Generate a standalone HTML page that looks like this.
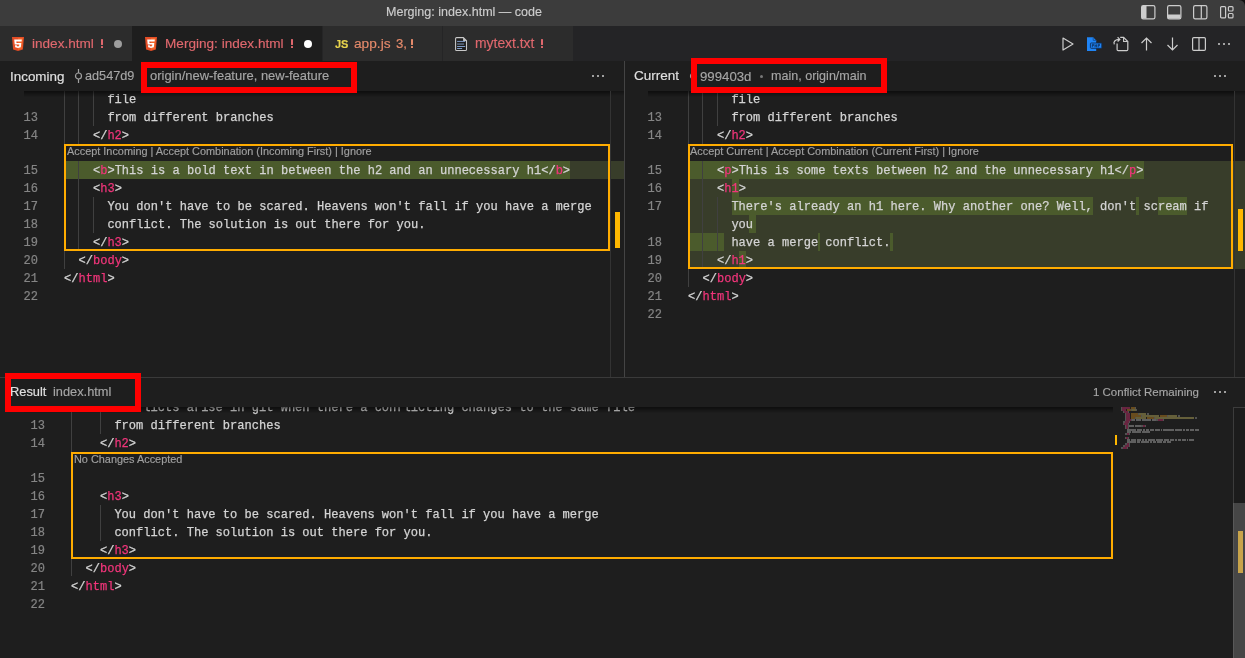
<!DOCTYPE html><html><head><meta charset="utf-8"><style>
*{margin:0;padding:0;box-sizing:border-box}
html,body{width:1245px;height:658px;overflow:hidden;background:#1e1e1e}
body{position:relative;font-family:"Liberation Sans",sans-serif}
.a{position:absolute}
.ui{font-family:"Liberation Sans",sans-serif;white-space:nowrap;will-change:transform;-webkit-text-stroke:0.15px}
.code{font-family:"Liberation Mono",monospace;font-size:12.05px;line-height:18px;white-space:pre;color:#d4d4d4;will-change:transform;-webkit-text-stroke:0.25px}
.br{color:#d4d4d4}
.tg{color:#f0357a}
.ln{font-family:"Liberation Mono",monospace;font-size:12px;line-height:18px;color:#858585;text-align:right;width:30px;will-change:transform;-webkit-text-stroke:0.2px}
.clip{overflow:hidden}
.guide{position:absolute;width:1px;background:#404040}
.box{position:absolute;border:2px solid #ffac00}
.lens{font-family:"Liberation Sans",sans-serif;font-size:10.9px;line-height:10.9px;color:#a0a0a0;white-space:nowrap;will-change:transform;-webkit-text-stroke:0.15px}
.red{position:absolute;border:6.4px solid #ff0000}
</style></head><body>

<div class="a" style="left:1235px;top:0;width:10px;height:10px;background:#111"></div>
<div class="a" style="left:0;top:0;width:1245px;height:26px;background:#3c3c3c;border-top-right-radius:6px"></div>
<div class="a ui" style="left:386.10px;top:5.69px;font-size:12.54px;line-height:12.54px;color:#cccccc;">Merging: index.html — code</div>
<svg class="a" style="left:1141px;top:5px" width="15" height="15" viewBox="0 0 15 15"><rect x="0.6" y="0.6" width="13.3" height="13.3" rx="1.6" fill="none" stroke="#cccccc" stroke-width="1.2"/><rect x="1" y="1" width="4.5" height="12.5" fill="#cccccc"/></svg>
<svg class="a" style="left:1167px;top:5px" width="15" height="15" viewBox="0 0 15 15"><rect x="0.6" y="0.6" width="13.3" height="13.3" rx="1.6" fill="none" stroke="#cccccc" stroke-width="1.2"/><rect x="1" y="9.5" width="12.5" height="4" fill="#cccccc"/></svg>
<svg class="a" style="left:1193px;top:5px" width="15" height="15" viewBox="0 0 15 15"><rect x="0.6" y="0.6" width="13.3" height="13.3" rx="1.6" fill="none" stroke="#cccccc" stroke-width="1.2"/><rect x="7.7" y="1" width="1.2" height="12.5" fill="#cccccc"/></svg>
<svg class="a" style="left:1220px;top:5px" width="15" height="15" viewBox="0 0 15 15"><rect x="0.6" y="1.6" width="5" height="11.3" rx="1" fill="none" stroke="#cccccc" stroke-width="1.2"/><rect x="8.4" y="1.6" width="4.6" height="4.4" rx="1" fill="none" stroke="#cccccc" stroke-width="1.2"/><rect x="8.4" y="8.5" width="4.6" height="4.4" rx="1" fill="none" stroke="#cccccc" stroke-width="1.2"/></svg>
<div class="a" style="left:0;top:26px;width:1245px;height:35px;background:#242426"></div>
<div class="a" style="left:0;top:26px;width:132px;height:35px;background:#2c2c2c"></div>
<svg class="a" style="left:12px;top:37px" width="12" height="14" viewBox="0 0 12 14"><path d="M0 0H12L10.9 12.4L6 14L1.1 12.4Z" fill="#e44d26"/><path d="M6 1.1V12.9L9.9 11.7L10.8 1.1Z" fill="#f16529"/><path d="M2.2 2.6H9.8L9.6 4.4H4.3L4.5 5.9H9.3L8.8 10.2L6 11L3.2 10.2L3 8.2H4.8L4.9 9.1L6 9.4L7.1 9.1L7.3 7.6H2.7Z" fill="#ffffff"/></svg>
<div class="a ui" style="left:31.80px;top:37.11px;font-size:13.58px;line-height:13.58px;color:#e0686e;">index.html</div>
<div class="a" style="left:101.2px;top:39.2px;width:1.5px;height:6.2px;background:#e0686e;border-radius:0.6px"></div><div class="a" style="left:101.2px;top:46.2px;width:1.5px;height:1.8px;background:#e0686e;border-radius:0.5px"></div>
<div class="a" style="left:113.8px;top:40px;width:8px;height:8px;border-radius:50%;background:#9d9d9d"></div>
<div class="a" style="left:132px;top:26px;width:190px;height:35px;background:#1e1e1e"></div>
<svg class="a" style="left:145px;top:37px" width="12" height="14" viewBox="0 0 12 14"><path d="M0 0H12L10.9 12.4L6 14L1.1 12.4Z" fill="#e44d26"/><path d="M6 1.1V12.9L9.9 11.7L10.8 1.1Z" fill="#f16529"/><path d="M2.2 2.6H9.8L9.6 4.4H4.3L4.5 5.9H9.3L8.8 10.2L6 11L3.2 10.2L3 8.2H4.8L4.9 9.1L6 9.4L7.1 9.1L7.3 7.6H2.7Z" fill="#ffffff"/></svg>
<div class="a ui" style="left:164.90px;top:37.09px;font-size:13.6px;line-height:13.6px;color:#e0686e;">Merging: index.html</div>
<div class="a" style="left:291.2px;top:39.2px;width:1.5px;height:6.2px;background:#e0686e;border-radius:0.6px"></div><div class="a" style="left:291.2px;top:46.2px;width:1.5px;height:1.8px;background:#e0686e;border-radius:0.5px"></div>
<div class="a" style="left:303.5px;top:39.8px;width:8.4px;height:8.4px;border-radius:50%;background:#ffffff"></div>
<div class="a" style="left:322px;top:26px;width:120px;height:35px;background:#2c2c2c;border-left:1px solid #252526"></div>
<div class="a ui" style="left:335px;top:37px;font-size:11px;line-height:14px;font-weight:bold;color:#e8d44d">JS</div>
<div class="a ui" style="left:353.60px;top:37.01px;font-size:13.7px;line-height:13.7px;color:#e58a6b;">app.js</div>
<div class="a ui" style="left:395.80px;top:37.43px;font-size:13.2px;line-height:13.2px;color:#e58a6b;">3,</div>
<div class="a" style="left:411.3px;top:39.2px;width:1.5px;height:6.2px;background:#e58a6b;border-radius:0.6px"></div><div class="a" style="left:411.3px;top:46.2px;width:1.5px;height:1.8px;background:#e58a6b;border-radius:0.5px"></div>
<div class="a" style="left:442px;top:26px;width:131px;height:35px;background:#2c2c2c;border-left:1px solid #252526"></div>
<svg class="a" style="left:455px;top:37px" width="13" height="15" viewBox="0 0 13 15"><path d="M1.6 0.6H8.3L11.5 3.8V12.4Q11.5 13.5 10.4 13.5H1.6Q0.6 13.5 0.6 12.4V1.6Q0.6 0.6 1.6 0.6Z" fill="#1e1e1e" stroke="#c8c8c8" stroke-width="1.1"/><path d="M8.1 0.6V4H11.5Z" fill="#c8c8c8"/><rect x="2.1" y="3.9" width="8.1" height="1" fill="#7f9cc8"/><rect x="2.1" y="6.3" width="7" height="1.6" fill="#58687e"/><rect x="2.1" y="9" width="8.1" height="1" fill="#7f9cc8"/><rect x="2.1" y="11" width="5" height="1" fill="#7f9cc8"/></svg>
<div class="a ui" style="left:474.70px;top:36.84px;font-size:13.9px;line-height:13.9px;color:#e0686e;">mytext.txt</div>
<div class="a" style="left:541.4px;top:39.2px;width:1.5px;height:6.2px;background:#e0686e;border-radius:0.6px"></div><div class="a" style="left:541.4px;top:46.2px;width:1.5px;height:1.8px;background:#e0686e;border-radius:0.5px"></div>
<svg class="a" style="left:1060px;top:36px" width="180" height="16" viewBox="0 0 180 16"><path d="M3 2L13 8L3 14Z" fill="none" stroke="#cccccc" stroke-width="1.2" stroke-linejoin="round"/><path d="M27 1.2H33.2L36.2 4.4V14.9H27Z" fill="#1f84f5"/><path d="M33.2 1.4V4.4H36" fill="none" stroke="#0f4c94" stroke-width="0.8"/><rect x="30.4" y="7" width="11.4" height="5.3" rx="0.8" fill="#1f84f5" stroke="#0c2f5c" stroke-width="0.9"/><path d="M32.3 11.3V8.3H33.6V9.6H32.3M35 11.3V8.3M35 9.8H36.6M36.6 8.3V11.3M38.2 11.3V8.3H39.5V9.6H38.2" fill="none" stroke="#0c2f5c" stroke-width="0.8"/><path d="M60.2 1.3H63.6L67.8 5.5V13.6Q67.8 14.7 66.7 14.7H58.2Q57.1 14.7 57.1 13.6V7.4" fill="none" stroke="#cccccc" stroke-width="1.2"/><path d="M63.6 1.5V5.5H67.6" fill="none" stroke="#cccccc" stroke-width="1.1"/><path d="M54.4 8.4C53 6 55 3.4 59.5 3.4M57.6 1.3L59.8 3.4L57.6 5.5" fill="none" stroke="#cccccc" stroke-width="1.2"/><path d="M86.5 14.5V2M81.5 7L86.5 2L91.5 7" fill="none" stroke="#cccccc" stroke-width="1.2"/><path d="M112.5 1.5V14M107.5 9L112.5 14L117.5 9" fill="none" stroke="#cccccc" stroke-width="1.2"/><rect x="132.6" y="1.6" width="12.8" height="12.8" rx="1.2" fill="none" stroke="#cccccc" stroke-width="1.2"/><rect x="138.4" y="2" width="1.2" height="12" fill="#cccccc"/><circle cx="159" cy="8" r="1" fill="#cccccc"/><circle cx="164" cy="8" r="1" fill="#cccccc"/><circle cx="169" cy="8" r="1" fill="#cccccc"/></svg>
<div class="a" style="left:0;top:61px;width:1245px;height:30px;background:#1e1e1e"></div>
<div class="a" style="left:624px;top:61px;width:1px;height:316px;background:#444444"></div>
<div class="a ui" style="left:9.80px;top:69.56px;font-size:13.41px;line-height:13.41px;color:#e0e0e0;">Incoming</div>
<svg class="a" style="left:74px;top:69px" width="9" height="14" viewBox="0 0 9 14"><circle cx="4.5" cy="7" r="3" fill="none" stroke="#a0a0a0" stroke-width="1.2"/><path d="M4.5 0V4M4.5 10V14" stroke="#a0a0a0" stroke-width="1.2"/></svg>
<div class="a ui" style="left:85.00px;top:70.06px;font-size:12.69px;line-height:12.69px;color:#a6a6a6;">ad547d9</div>
<div class="a ui" style="left:149.90px;top:69.84px;font-size:12.96px;line-height:12.96px;color:#a6a6a6;">origin/new-feature, new-feature</div>
<svg class="a" style="left:591px;top:74px" width="14" height="4" viewBox="0 0 14 4"><circle cx="2" cy="2" r="1" fill="#cccccc"/><circle cx="7" cy="2" r="1" fill="#cccccc"/><circle cx="12" cy="2" r="1" fill="#cccccc"/></svg>
<div class="a ui" style="left:633.80px;top:69.36px;font-size:13.52px;line-height:13.52px;color:#e0e0e0;">Current</div>
<svg class="a" style="left:688.5px;top:69px" width="9" height="14" viewBox="0 0 9 14"><circle cx="4.5" cy="7" r="3" fill="none" stroke="#a0a0a0" stroke-width="1.2"/><path d="M4.5 0V4M4.5 10V14" stroke="#a0a0a0" stroke-width="1.2"/></svg>
<div class="a ui" style="left:699.90px;top:69.61px;font-size:13.23px;line-height:13.23px;color:#a6a6a6;">999403d</div>
<div class="a" style="left:760px;top:75px;width:3px;height:3px;border-radius:50%;background:#777"></div>
<div class="a ui" style="left:770.70px;top:70.18px;font-size:12.55px;line-height:12.55px;color:#a6a6a6;">main, origin/main</div>
<svg class="a" style="left:1213px;top:74px" width="14" height="4" viewBox="0 0 14 4"><circle cx="2" cy="2" r="1" fill="#cccccc"/><circle cx="7" cy="2" r="1" fill="#cccccc"/><circle cx="12" cy="2" r="1" fill="#cccccc"/></svg>
<div class="a clip" style="left:0px;top:91px;width:624px;height:286px">
<div class="a" style="left:64px;top:70px;width:560px;height:18px;background:#383d2a"></div><div class="a" style="left:64px;top:70px;width:506px;height:18px;background:#4b5b2c"></div><div class="guide" style="left:64px;top:0;height:178px"></div><div class="guide" style="left:78px;top:0;height:53px"></div><div class="guide" style="left:78px;top:70px;height:90px"></div><div class="guide" style="left:93px;top:0;height:35px"></div><div class="guide" style="left:93px;top:106px;height:36px"></div>
<div class="a code" style="left:63.9px;top:-0.4px">      file</div>
<div class="a ln" style="left:8px;top:17.6px">13</div>
<div class="a code" style="left:63.9px;top:17.6px">      from different branches</div>
<div class="a ln" style="left:8px;top:35.6px">14</div>
<div class="a code" style="left:63.9px;top:35.6px">    <span class=br>&lt;/</span><span class=tg>h2</span><span class=br>&gt;</span></div>
<div class="a ln" style="left:8px;top:70.6px">15</div>
<div class="a code" style="left:63.9px;top:70.6px">    <span class=br>&lt;</span><span class=tg>b</span><span class=br>&gt;</span>This is a bold text in between the h2 and an unnecessary h1<span class=br>&lt;/</span><span class=tg>b</span><span class=br>&gt;</span></div>
<div class="a ln" style="left:8px;top:88.6px">16</div>
<div class="a code" style="left:63.9px;top:88.6px">    <span class=br>&lt;</span><span class=tg>h3</span><span class=br>&gt;</span></div>
<div class="a ln" style="left:8px;top:106.6px">17</div>
<div class="a code" style="left:63.9px;top:106.6px">      You don't have to be scared. Heavens won't fall if you have a merge</div>
<div class="a ln" style="left:8px;top:124.6px">18</div>
<div class="a code" style="left:63.9px;top:124.6px">      conflict. The solution is out there for you.</div>
<div class="a ln" style="left:8px;top:142.6px">19</div>
<div class="a code" style="left:63.9px;top:142.6px">    <span class=br>&lt;/</span><span class=tg>h3</span><span class=br>&gt;</span></div>
<div class="a ln" style="left:8px;top:160.6px">20</div>
<div class="a code" style="left:63.9px;top:160.6px">  <span class=br>&lt;/</span><span class=tg>body</span><span class=br>&gt;</span></div>
<div class="a ln" style="left:8px;top:178.6px">21</div>
<div class="a code" style="left:63.9px;top:178.6px"><span class=br>&lt;/</span><span class=tg>html</span><span class=br>&gt;</span></div>
<div class="a ln" style="left:8px;top:196.6px">22</div>
<div class="a code" style="left:63.9px;top:196.6px"></div>
<div class="box" style="left:64px;top:53px;width:546px;height:107px"></div><div class="a lens" style="left:66.80px;top:54.68px">Accept Incoming | Accept Combination (Incoming First) | Ignore</div><div class="a" style="left:610px;top:0;width:1px;height:290px;background:#333"></div><div class="a" style="left:615px;top:121px;width:5px;height:36px;background:#ffb800"></div><div class="a" style="left:24px;top:0;width:586px;height:6px;background:linear-gradient(rgba(0,0,0,0.55),rgba(0,0,0,0))"></div><div class="a" style="left:611px;top:0;width:13px;height:5px;background:linear-gradient(rgba(0,0,0,0.3),rgba(0,0,0,0))"></div>
</div>
<div class="a clip" style="left:624px;top:91px;width:621px;height:286px">
<div class="a" style="left:64.00px;top:70px;width:557.00px;height:18px;background:#383d2a"></div><div class="a" style="left:64px;top:70px;width:557px;height:108px;background:#383d2a"></div><div class="a" style="left:64.00px;top:70px;width:455.67px;height:18px;background:#4b5b2c"></div><div class="a" style="left:107.85px;top:88px;width:7.23px;height:18px;background:#4b5b2c"></div><div class="a" style="left:107.85px;top:106px;width:361.25px;height:18px;background:#4b5b2c"></div><div class="a" style="left:512.15px;top:106px;width:2.70px;height:18px;background:#4b5b2c"></div><div class="a" style="left:534.12px;top:106px;width:28.90px;height:18px;background:#4b5b2c"></div><div class="a" style="left:125.00px;top:124px;width:7.00px;height:18px;background:#4b5b2c"></div><div class="a" style="left:64.00px;top:142px;width:36.00px;height:18px;background:#4b5b2c"></div><div class="a" style="left:193.95px;top:142px;width:2.40px;height:18px;background:#4b5b2c"></div><div class="a" style="left:266.20px;top:142px;width:2.40px;height:18px;background:#4b5b2c"></div><div class="a" style="left:115.08px;top:160px;width:7.22px;height:18px;background:#4b5b2c"></div><div class="guide" style="left:64px;top:0;height:196px"></div><div class="guide" style="left:78px;top:0;height:53px"></div><div class="guide" style="left:78px;top:70px;height:108px"></div><div class="guide" style="left:93px;top:0;height:35px"></div><div class="guide" style="left:93px;top:106px;height:54px"></div>
<div class="a code" style="left:63.9px;top:-0.4px">      file</div>
<div class="a ln" style="left:8px;top:17.6px">13</div>
<div class="a code" style="left:63.9px;top:17.6px">      from different branches</div>
<div class="a ln" style="left:8px;top:35.6px">14</div>
<div class="a code" style="left:63.9px;top:35.6px">    <span class=br>&lt;/</span><span class=tg>h2</span><span class=br>&gt;</span></div>
<div class="a ln" style="left:8px;top:70.6px">15</div>
<div class="a code" style="left:63.9px;top:70.6px">    <span class=br>&lt;</span><span class=tg>p</span><span class=br>&gt;</span>This is some texts between h2 and the unnecessary h1<span class=br>&lt;/</span><span class=tg>p</span><span class=br>&gt;</span></div>
<div class="a ln" style="left:8px;top:88.6px">16</div>
<div class="a code" style="left:63.9px;top:88.6px">    <span class=br>&lt;</span><span class=tg>h1</span><span class=br>&gt;</span></div>
<div class="a ln" style="left:8px;top:106.6px">17</div>
<div class="a code" style="left:63.9px;top:106.6px">      There's already an h1 here. Why another one? Well, don't scream if</div>
<div class="a code" style="left:63.9px;top:124.6px">      you</div>
<div class="a ln" style="left:8px;top:142.6px">18</div>
<div class="a code" style="left:63.9px;top:142.6px">      have a merge conflict.</div>
<div class="a ln" style="left:8px;top:160.6px">19</div>
<div class="a code" style="left:63.9px;top:160.6px">    <span class=br>&lt;/</span><span class=tg>h1</span><span class=br>&gt;</span></div>
<div class="a ln" style="left:8px;top:178.6px">20</div>
<div class="a code" style="left:63.9px;top:178.6px">  <span class=br>&lt;/</span><span class=tg>body</span><span class=br>&gt;</span></div>
<div class="a ln" style="left:8px;top:196.6px">21</div>
<div class="a code" style="left:63.9px;top:196.6px"><span class=br>&lt;/</span><span class=tg>html</span><span class=br>&gt;</span></div>
<div class="a ln" style="left:8px;top:214.6px">22</div>
<div class="a code" style="left:63.9px;top:214.6px"></div>
<div class="box" style="left:64px;top:53px;width:545px;height:125px"></div><div class="a lens" style="left:66.30px;top:54.68px">Accept Current | Accept Combination (Current First) | Ignore</div><div class="a" style="left:610px;top:0;width:1px;height:290px;background:#333"></div><div class="a" style="left:614px;top:118px;width:5px;height:42px;background:#ffb800"></div><div class="a" style="left:24px;top:0;width:586px;height:6px;background:linear-gradient(rgba(0,0,0,0.55),rgba(0,0,0,0))"></div><div class="a" style="left:611px;top:0;width:13px;height:5px;background:linear-gradient(rgba(0,0,0,0.3),rgba(0,0,0,0))"></div>
</div>
<div class="a" style="left:0;top:377px;width:1245px;height:1px;background:#3a3a3a"></div>
<div class="a ui" style="left:10.10px;top:386.34px;font-size:12.84px;line-height:12.84px;color:#e0e0e0;">Result</div>
<div class="a ui" style="left:52.90px;top:386.36px;font-size:12.81px;line-height:12.81px;color:#a6a6a6;">index.html</div>
<div class="a ui" style="left:1092.60px;top:386.68px;font-size:11.49px;line-height:11.49px;color:#a6a6a6;">1 Conflict Remaining</div>
<svg class="a" style="left:1213px;top:390px" width="14" height="4" viewBox="0 0 14 4"><circle cx="2" cy="2" r="1" fill="#cccccc"/><circle cx="7" cy="2" r="1" fill="#cccccc"/><circle cx="12" cy="2" r="1" fill="#cccccc"/></svg>
<div class="a clip" style="left:0px;top:407px;width:1245px;height:251px">
<div class="guide" style="left:71px;top:0;height:169px"></div><div class="guide" style="left:100px;top:0;height:27px"></div><div class="guide" style="left:100px;top:98px;height:36px"></div>
<div class="a code" style="left:70.9px;top:-8.4px">      conflicts arise in git when there a conflicting changes to the same file</div>
<div class="a ln" style="left:14.5px;top:9.6px">13</div>
<div class="a code" style="left:70.9px;top:9.6px">      from different branches</div>
<div class="a ln" style="left:14.5px;top:27.6px">14</div>
<div class="a code" style="left:70.9px;top:27.6px">    <span class=br>&lt;/</span><span class=tg>h2</span><span class=br>&gt;</span></div>
<div class="a ln" style="left:14.5px;top:62.6px">15</div>
<div class="a code" style="left:70.9px;top:62.6px"></div>
<div class="a ln" style="left:14.5px;top:80.6px">16</div>
<div class="a code" style="left:70.9px;top:80.6px">    <span class=br>&lt;</span><span class=tg>h3</span><span class=br>&gt;</span></div>
<div class="a ln" style="left:14.5px;top:98.6px">17</div>
<div class="a code" style="left:70.9px;top:98.6px">      You don't have to be scared. Heavens won't fall if you have a merge</div>
<div class="a ln" style="left:14.5px;top:116.6px">18</div>
<div class="a code" style="left:70.9px;top:116.6px">      conflict. The solution is out there for you.</div>
<div class="a ln" style="left:14.5px;top:134.6px">19</div>
<div class="a code" style="left:70.9px;top:134.6px">    <span class=br>&lt;/</span><span class=tg>h3</span><span class=br>&gt;</span></div>
<div class="a ln" style="left:14.5px;top:152.6px">20</div>
<div class="a code" style="left:70.9px;top:152.6px">  <span class=br>&lt;/</span><span class=tg>body</span><span class=br>&gt;</span></div>
<div class="a ln" style="left:14.5px;top:170.6px">21</div>
<div class="a code" style="left:70.9px;top:170.6px"><span class=br>&lt;/</span><span class=tg>html</span><span class=br>&gt;</span></div>
<div class="a ln" style="left:14.5px;top:188.6px">22</div>
<div class="a code" style="left:70.9px;top:188.6px"></div>
<div class="box" style="left:71px;top:45px;width:1042px;height:107px"></div><div class="a lens" style="left:73.80px;top:46.78px">No Changes Accepted</div><div class="a" style="left:1115px;top:28px;width:2px;height:10px;background:#ffb800"></div><div class="a" style="left:1233px;top:0;width:12px;height:251px;background:#1c1c1c;border-left:1px solid #3c3c3c;border-top:1px solid #3c3c3c"></div><div class="a" style="left:1234px;top:96px;width:11px;height:155px;background:#464646"></div><div class="a" style="left:1233px;top:96px;width:1px;height:155px;background:#585858"></div><div class="a" style="left:1238px;top:124px;width:5px;height:42px;background:#c8a44a"></div><div class="a" style="left:24px;top:0;width:1089px;height:6px;background:linear-gradient(rgba(0,0,0,0.55),rgba(0,0,0,0))"></div><svg class="a" style="left:1120.9px;top:0px;opacity:0.9" width="90" height="46" viewBox="0 0 90 46"><rect x="0.1" y="0.45" width="0.85" height="1.1" fill="#9a9a9a"/><rect x="1.1" y="0.45" width="0.85" height="1.1" fill="#d03070"/><rect x="2.1" y="0.45" width="0.85" height="1.1" fill="#d03070"/><rect x="3.1" y="0.45" width="0.85" height="1.1" fill="#d03070"/><rect x="4.1" y="0.45" width="0.85" height="1.1" fill="#d03070"/><rect x="5.1" y="0.45" width="0.85" height="1.1" fill="#d03070"/><rect x="6.1" y="0.45" width="0.85" height="1.1" fill="#d03070"/><rect x="7.1" y="0.45" width="0.85" height="1.1" fill="#d03070"/><rect x="8.1" y="0.45" width="0.85" height="1.1" fill="#d03070"/><rect x="10.1" y="0.45" width="0.85" height="1.1" fill="#d08c22"/><rect x="11.1" y="0.45" width="0.85" height="1.1" fill="#d08c22"/><rect x="12.1" y="0.45" width="0.85" height="1.1" fill="#d08c22"/><rect x="13.1" y="0.45" width="0.85" height="1.1" fill="#d08c22"/><rect x="14.1" y="0.45" width="0.85" height="1.1" fill="#9a9a9a"/><rect x="0.1" y="2.45" width="0.85" height="1.1" fill="#9a9a9a"/><rect x="1.1" y="2.45" width="0.85" height="1.1" fill="#d03070"/><rect x="2.1" y="2.45" width="0.85" height="1.1" fill="#d03070"/><rect x="3.1" y="2.45" width="0.85" height="1.1" fill="#d03070"/><rect x="4.1" y="2.45" width="0.85" height="1.1" fill="#d03070"/><rect x="6.1" y="2.45" width="0.85" height="1.1" fill="#d08c22"/><rect x="7.1" y="2.45" width="0.85" height="1.1" fill="#d08c22"/><rect x="8.1" y="2.45" width="0.85" height="1.1" fill="#d08c22"/><rect x="9.1" y="2.45" width="0.85" height="1.1" fill="#d08c22"/><rect x="10.1" y="2.45" width="0.85" height="1.1" fill="#9a9a9a"/><rect x="11.1" y="2.45" width="0.85" height="1.1" fill="#c8b860"/><rect x="12.1" y="2.45" width="0.85" height="1.1" fill="#c8b860"/><rect x="13.1" y="2.45" width="0.85" height="1.1" fill="#c8b860"/><rect x="14.1" y="2.45" width="0.85" height="1.1" fill="#c8b860"/><rect x="15.1" y="2.45" width="0.85" height="1.1" fill="#9a9a9a"/><rect x="2.1" y="4.45" width="0.85" height="1.1" fill="#9a9a9a"/><rect x="3.1" y="4.45" width="0.85" height="1.1" fill="#d03070"/><rect x="4.1" y="4.45" width="0.85" height="1.1" fill="#d03070"/><rect x="5.1" y="4.45" width="0.85" height="1.1" fill="#d03070"/><rect x="6.1" y="4.45" width="0.85" height="1.1" fill="#d03070"/><rect x="7.1" y="4.45" width="0.85" height="1.1" fill="#9a9a9a"/><rect x="4.1" y="6.45" width="0.85" height="1.1" fill="#9a9a9a"/><rect x="5.1" y="6.45" width="0.85" height="1.1" fill="#d03070"/><rect x="6.1" y="6.45" width="0.85" height="1.1" fill="#d03070"/><rect x="7.1" y="6.45" width="0.85" height="1.1" fill="#d03070"/><rect x="8.1" y="6.45" width="0.85" height="1.1" fill="#d03070"/><rect x="10.1" y="6.45" width="0.85" height="1.1" fill="#d08c22"/><rect x="11.1" y="6.45" width="0.85" height="1.1" fill="#d08c22"/><rect x="12.1" y="6.45" width="0.85" height="1.1" fill="#d08c22"/><rect x="13.1" y="6.45" width="0.85" height="1.1" fill="#d08c22"/><rect x="14.1" y="6.45" width="0.85" height="1.1" fill="#d08c22"/><rect x="15.1" y="6.45" width="0.85" height="1.1" fill="#d08c22"/><rect x="16.1" y="6.45" width="0.85" height="1.1" fill="#d08c22"/><rect x="17.1" y="6.45" width="0.85" height="1.1" fill="#9a9a9a"/><rect x="18.1" y="6.45" width="0.85" height="1.1" fill="#c8b860"/><rect x="19.1" y="6.45" width="0.85" height="1.1" fill="#c8b860"/><rect x="20.1" y="6.45" width="0.85" height="1.1" fill="#c8b860"/><rect x="21.1" y="6.45" width="0.85" height="1.1" fill="#c8b860"/><rect x="22.1" y="6.45" width="0.85" height="1.1" fill="#c8b860"/><rect x="23.1" y="6.45" width="0.85" height="1.1" fill="#c8b860"/><rect x="24.1" y="6.45" width="0.85" height="1.1" fill="#c8b860"/><rect x="26.1" y="6.45" width="0.85" height="1.1" fill="#9a9a9a"/><rect x="27.1" y="6.45" width="0.85" height="1.1" fill="#9a9a9a"/><rect x="4.1" y="8.45" width="0.85" height="1.1" fill="#9a9a9a"/><rect x="5.1" y="8.45" width="0.85" height="1.1" fill="#d03070"/><rect x="6.1" y="8.45" width="0.85" height="1.1" fill="#d03070"/><rect x="7.1" y="8.45" width="0.85" height="1.1" fill="#d03070"/><rect x="8.1" y="8.45" width="0.85" height="1.1" fill="#d03070"/><rect x="10.1" y="8.45" width="0.85" height="1.1" fill="#d08c22"/><rect x="11.1" y="8.45" width="0.85" height="1.1" fill="#d08c22"/><rect x="12.1" y="8.45" width="0.85" height="1.1" fill="#d08c22"/><rect x="13.1" y="8.45" width="0.85" height="1.1" fill="#d08c22"/><rect x="14.1" y="8.45" width="0.85" height="1.1" fill="#d08c22"/><rect x="15.1" y="8.45" width="0.85" height="1.1" fill="#d08c22"/><rect x="16.1" y="8.45" width="0.85" height="1.1" fill="#d08c22"/><rect x="17.1" y="8.45" width="0.85" height="1.1" fill="#d08c22"/><rect x="18.1" y="8.45" width="0.85" height="1.1" fill="#d08c22"/><rect x="19.1" y="8.45" width="0.85" height="1.1" fill="#d08c22"/><rect x="20.1" y="8.45" width="0.85" height="1.1" fill="#9a9a9a"/><rect x="21.1" y="8.45" width="0.85" height="1.1" fill="#c8b860"/><rect x="22.1" y="8.45" width="0.85" height="1.1" fill="#c8b860"/><rect x="23.1" y="8.45" width="0.85" height="1.1" fill="#c8b860"/><rect x="24.1" y="8.45" width="0.85" height="1.1" fill="#c8b860"/><rect x="25.1" y="8.45" width="0.85" height="1.1" fill="#c8b860"/><rect x="26.1" y="8.45" width="0.85" height="1.1" fill="#c8b860"/><rect x="27.1" y="8.45" width="0.85" height="1.1" fill="#c8b860"/><rect x="28.1" y="8.45" width="0.85" height="1.1" fill="#c8b860"/><rect x="29.1" y="8.45" width="0.85" height="1.1" fill="#c8b860"/><rect x="30.1" y="8.45" width="0.85" height="1.1" fill="#c8b860"/><rect x="31.1" y="8.45" width="0.85" height="1.1" fill="#c8b860"/><rect x="32.1" y="8.45" width="0.85" height="1.1" fill="#c8b860"/><rect x="33.1" y="8.45" width="0.85" height="1.1" fill="#c8b860"/><rect x="34.1" y="8.45" width="0.85" height="1.1" fill="#c8b860"/><rect x="35.1" y="8.45" width="0.85" height="1.1" fill="#c8b860"/><rect x="36.1" y="8.45" width="0.85" height="1.1" fill="#c8b860"/><rect x="37.1" y="8.45" width="0.85" height="1.1" fill="#c8b860"/><rect x="39.1" y="8.45" width="0.85" height="1.1" fill="#d08c22"/><rect x="40.1" y="8.45" width="0.85" height="1.1" fill="#d08c22"/><rect x="41.1" y="8.45" width="0.85" height="1.1" fill="#d08c22"/><rect x="42.1" y="8.45" width="0.85" height="1.1" fill="#d08c22"/><rect x="43.1" y="8.45" width="0.85" height="1.1" fill="#d08c22"/><rect x="44.1" y="8.45" width="0.85" height="1.1" fill="#d08c22"/><rect x="45.1" y="8.45" width="0.85" height="1.1" fill="#d08c22"/><rect x="46.1" y="8.45" width="0.85" height="1.1" fill="#9a9a9a"/><rect x="47.1" y="8.45" width="0.85" height="1.1" fill="#c8b860"/><rect x="48.1" y="8.45" width="0.85" height="1.1" fill="#c8b860"/><rect x="49.1" y="8.45" width="0.85" height="1.1" fill="#c8b860"/><rect x="50.1" y="8.45" width="0.85" height="1.1" fill="#c8b860"/><rect x="51.1" y="8.45" width="0.85" height="1.1" fill="#c8b860"/><rect x="52.1" y="8.45" width="0.85" height="1.1" fill="#c8b860"/><rect x="53.1" y="8.45" width="0.85" height="1.1" fill="#c8b860"/><rect x="54.1" y="8.45" width="0.85" height="1.1" fill="#c8b860"/><rect x="55.1" y="8.45" width="0.85" height="1.1" fill="#c8b860"/><rect x="57.1" y="8.45" width="0.85" height="1.1" fill="#9a9a9a"/><rect x="58.1" y="8.45" width="0.85" height="1.1" fill="#9a9a9a"/><rect x="4.1" y="10.45" width="0.85" height="1.1" fill="#9a9a9a"/><rect x="5.1" y="10.45" width="0.85" height="1.1" fill="#d03070"/><rect x="6.1" y="10.45" width="0.85" height="1.1" fill="#d03070"/><rect x="7.1" y="10.45" width="0.85" height="1.1" fill="#d03070"/><rect x="8.1" y="10.45" width="0.85" height="1.1" fill="#d03070"/><rect x="10.1" y="10.45" width="0.85" height="1.1" fill="#d08c22"/><rect x="11.1" y="10.45" width="0.85" height="1.1" fill="#d08c22"/><rect x="12.1" y="10.45" width="0.85" height="1.1" fill="#d08c22"/><rect x="13.1" y="10.45" width="0.85" height="1.1" fill="#d08c22"/><rect x="14.1" y="10.45" width="0.85" height="1.1" fill="#9a9a9a"/><rect x="15.1" y="10.45" width="0.85" height="1.1" fill="#c8b860"/><rect x="16.1" y="10.45" width="0.85" height="1.1" fill="#c8b860"/><rect x="17.1" y="10.45" width="0.85" height="1.1" fill="#c8b860"/><rect x="18.1" y="10.45" width="0.85" height="1.1" fill="#c8b860"/><rect x="19.1" y="10.45" width="0.85" height="1.1" fill="#c8b860"/><rect x="20.1" y="10.45" width="0.85" height="1.1" fill="#c8b860"/><rect x="21.1" y="10.45" width="0.85" height="1.1" fill="#c8b860"/><rect x="22.1" y="10.45" width="0.85" height="1.1" fill="#c8b860"/><rect x="23.1" y="10.45" width="0.85" height="1.1" fill="#c8b860"/><rect x="24.1" y="10.45" width="0.85" height="1.1" fill="#c8b860"/><rect x="26.1" y="10.45" width="0.85" height="1.1" fill="#d08c22"/><rect x="27.1" y="10.45" width="0.85" height="1.1" fill="#d08c22"/><rect x="28.1" y="10.45" width="0.85" height="1.1" fill="#d08c22"/><rect x="29.1" y="10.45" width="0.85" height="1.1" fill="#d08c22"/><rect x="30.1" y="10.45" width="0.85" height="1.1" fill="#d08c22"/><rect x="31.1" y="10.45" width="0.85" height="1.1" fill="#d08c22"/><rect x="32.1" y="10.45" width="0.85" height="1.1" fill="#d08c22"/><rect x="33.1" y="10.45" width="0.85" height="1.1" fill="#9a9a9a"/><rect x="34.1" y="10.45" width="0.85" height="1.1" fill="#c8b860"/><rect x="35.1" y="10.45" width="0.85" height="1.1" fill="#c8b860"/><rect x="36.1" y="10.45" width="0.85" height="1.1" fill="#c8b860"/><rect x="37.1" y="10.45" width="0.85" height="1.1" fill="#c8b860"/><rect x="38.1" y="10.45" width="0.85" height="1.1" fill="#c8b860"/><rect x="39.1" y="10.45" width="0.85" height="1.1" fill="#c8b860"/><rect x="40.1" y="10.45" width="0.85" height="1.1" fill="#c8b860"/><rect x="41.1" y="10.45" width="0.85" height="1.1" fill="#c8b860"/><rect x="42.1" y="10.45" width="0.85" height="1.1" fill="#c8b860"/><rect x="43.1" y="10.45" width="0.85" height="1.1" fill="#c8b860"/><rect x="44.1" y="10.45" width="0.85" height="1.1" fill="#c8b860"/><rect x="45.1" y="10.45" width="0.85" height="1.1" fill="#c8b860"/><rect x="46.1" y="10.45" width="0.85" height="1.1" fill="#c8b860"/><rect x="47.1" y="10.45" width="0.85" height="1.1" fill="#c8b860"/><rect x="48.1" y="10.45" width="0.85" height="1.1" fill="#c8b860"/><rect x="49.1" y="10.45" width="0.85" height="1.1" fill="#c8b860"/><rect x="50.1" y="10.45" width="0.85" height="1.1" fill="#c8b860"/><rect x="51.1" y="10.45" width="0.85" height="1.1" fill="#c8b860"/><rect x="52.1" y="10.45" width="0.85" height="1.1" fill="#c8b860"/><rect x="53.1" y="10.45" width="0.85" height="1.1" fill="#c8b860"/><rect x="54.1" y="10.45" width="0.85" height="1.1" fill="#c8b860"/><rect x="55.1" y="10.45" width="0.85" height="1.1" fill="#c8b860"/><rect x="56.1" y="10.45" width="0.85" height="1.1" fill="#c8b860"/><rect x="57.1" y="10.45" width="0.85" height="1.1" fill="#c8b860"/><rect x="58.1" y="10.45" width="0.85" height="1.1" fill="#c8b860"/><rect x="59.1" y="10.45" width="0.85" height="1.1" fill="#c8b860"/><rect x="60.1" y="10.45" width="0.85" height="1.1" fill="#c8b860"/><rect x="61.1" y="10.45" width="0.85" height="1.1" fill="#c8b860"/><rect x="62.1" y="10.45" width="0.85" height="1.1" fill="#c8b860"/><rect x="63.1" y="10.45" width="0.85" height="1.1" fill="#c8b860"/><rect x="64.1" y="10.45" width="0.85" height="1.1" fill="#c8b860"/><rect x="65.1" y="10.45" width="0.85" height="1.1" fill="#c8b860"/><rect x="66.1" y="10.45" width="0.85" height="1.1" fill="#c8b860"/><rect x="67.1" y="10.45" width="0.85" height="1.1" fill="#c8b860"/><rect x="68.1" y="10.45" width="0.85" height="1.1" fill="#c8b860"/><rect x="69.1" y="10.45" width="0.85" height="1.1" fill="#c8b860"/><rect x="70.1" y="10.45" width="0.85" height="1.1" fill="#c8b860"/><rect x="71.1" y="10.45" width="0.85" height="1.1" fill="#c8b860"/><rect x="72.1" y="10.45" width="0.85" height="1.1" fill="#c8b860"/><rect x="74.1" y="10.45" width="0.85" height="1.1" fill="#9a9a9a"/><rect x="75.1" y="10.45" width="0.85" height="1.1" fill="#9a9a9a"/><rect x="4.1" y="12.45" width="0.85" height="1.1" fill="#9a9a9a"/><rect x="5.1" y="12.45" width="0.85" height="1.1" fill="#d03070"/><rect x="6.1" y="12.45" width="0.85" height="1.1" fill="#d03070"/><rect x="7.1" y="12.45" width="0.85" height="1.1" fill="#d03070"/><rect x="8.1" y="12.45" width="0.85" height="1.1" fill="#d03070"/><rect x="9.1" y="12.45" width="0.85" height="1.1" fill="#d03070"/><rect x="10.1" y="12.45" width="0.85" height="1.1" fill="#9a9a9a"/><rect x="11.1" y="12.45" width="0.85" height="1.1" fill="#b8b8b8"/><rect x="12.1" y="12.45" width="0.85" height="1.1" fill="#b8b8b8"/><rect x="13.1" y="12.45" width="0.85" height="1.1" fill="#b8b8b8"/><rect x="15.1" y="12.45" width="0.85" height="1.1" fill="#b8b8b8"/><rect x="16.1" y="12.45" width="0.85" height="1.1" fill="#b8b8b8"/><rect x="17.1" y="12.45" width="0.85" height="1.1" fill="#b8b8b8"/><rect x="18.1" y="12.45" width="0.85" height="1.1" fill="#b8b8b8"/><rect x="19.1" y="12.45" width="0.85" height="1.1" fill="#b8b8b8"/><rect x="21.1" y="12.45" width="0.85" height="1.1" fill="#b8b8b8"/><rect x="22.1" y="12.45" width="0.85" height="1.1" fill="#b8b8b8"/><rect x="23.1" y="12.45" width="0.85" height="1.1" fill="#b8b8b8"/><rect x="24.1" y="12.45" width="0.85" height="1.1" fill="#b8b8b8"/><rect x="25.1" y="12.45" width="0.85" height="1.1" fill="#b8b8b8"/><rect x="26.1" y="12.45" width="0.85" height="1.1" fill="#b8b8b8"/><rect x="27.1" y="12.45" width="0.85" height="1.1" fill="#b8b8b8"/><rect x="28.1" y="12.45" width="0.85" height="1.1" fill="#b8b8b8"/><rect x="29.1" y="12.45" width="0.85" height="1.1" fill="#b8b8b8"/><rect x="31.1" y="12.45" width="0.85" height="1.1" fill="#b8b8b8"/><rect x="32.1" y="12.45" width="0.85" height="1.1" fill="#b8b8b8"/><rect x="33.1" y="12.45" width="0.85" height="1.1" fill="#b8b8b8"/><rect x="34.1" y="12.45" width="0.85" height="1.1" fill="#b8b8b8"/><rect x="35.1" y="12.45" width="0.85" height="1.1" fill="#9a9a9a"/><rect x="36.1" y="12.45" width="0.85" height="1.1" fill="#9a9a9a"/><rect x="37.1" y="12.45" width="0.85" height="1.1" fill="#d03070"/><rect x="38.1" y="12.45" width="0.85" height="1.1" fill="#d03070"/><rect x="39.1" y="12.45" width="0.85" height="1.1" fill="#d03070"/><rect x="40.1" y="12.45" width="0.85" height="1.1" fill="#d03070"/><rect x="41.1" y="12.45" width="0.85" height="1.1" fill="#d03070"/><rect x="42.1" y="12.45" width="0.85" height="1.1" fill="#9a9a9a"/><rect x="2.1" y="14.45" width="0.85" height="1.1" fill="#9a9a9a"/><rect x="3.1" y="14.45" width="0.85" height="1.1" fill="#9a9a9a"/><rect x="4.1" y="14.45" width="0.85" height="1.1" fill="#d03070"/><rect x="5.1" y="14.45" width="0.85" height="1.1" fill="#d03070"/><rect x="6.1" y="14.45" width="0.85" height="1.1" fill="#d03070"/><rect x="7.1" y="14.45" width="0.85" height="1.1" fill="#d03070"/><rect x="8.1" y="14.45" width="0.85" height="1.1" fill="#9a9a9a"/><rect x="2.1" y="16.45" width="0.85" height="1.1" fill="#9a9a9a"/><rect x="3.1" y="16.45" width="0.85" height="1.1" fill="#d03070"/><rect x="4.1" y="16.45" width="0.85" height="1.1" fill="#d03070"/><rect x="5.1" y="16.45" width="0.85" height="1.1" fill="#d03070"/><rect x="6.1" y="16.45" width="0.85" height="1.1" fill="#d03070"/><rect x="7.1" y="16.45" width="0.85" height="1.1" fill="#9a9a9a"/><rect x="4.1" y="18.45" width="0.85" height="1.1" fill="#9a9a9a"/><rect x="5.1" y="18.45" width="0.85" height="1.1" fill="#d03070"/><rect x="6.1" y="18.45" width="0.85" height="1.1" fill="#d03070"/><rect x="7.1" y="18.45" width="0.85" height="1.1" fill="#9a9a9a"/><rect x="8.1" y="18.45" width="0.85" height="1.1" fill="#b8b8b8"/><rect x="9.1" y="18.45" width="0.85" height="1.1" fill="#b8b8b8"/><rect x="10.1" y="18.45" width="0.85" height="1.1" fill="#b8b8b8"/><rect x="11.1" y="18.45" width="0.85" height="1.1" fill="#b8b8b8"/><rect x="12.1" y="18.45" width="0.85" height="1.1" fill="#b8b8b8"/><rect x="14.1" y="18.45" width="0.85" height="1.1" fill="#b8b8b8"/><rect x="15.1" y="18.45" width="0.85" height="1.1" fill="#b8b8b8"/><rect x="16.1" y="18.45" width="0.85" height="1.1" fill="#b8b8b8"/><rect x="17.1" y="18.45" width="0.85" height="1.1" fill="#b8b8b8"/><rect x="18.1" y="18.45" width="0.85" height="1.1" fill="#b8b8b8"/><rect x="19.1" y="18.45" width="0.85" height="1.1" fill="#b8b8b8"/><rect x="20.1" y="18.45" width="0.85" height="1.1" fill="#9a9a9a"/><rect x="21.1" y="18.45" width="0.85" height="1.1" fill="#9a9a9a"/><rect x="22.1" y="18.45" width="0.85" height="1.1" fill="#d03070"/><rect x="23.1" y="18.45" width="0.85" height="1.1" fill="#d03070"/><rect x="24.1" y="18.45" width="0.85" height="1.1" fill="#9a9a9a"/><rect x="4.1" y="20.45" width="0.85" height="1.1" fill="#9a9a9a"/><rect x="5.1" y="20.45" width="0.85" height="1.1" fill="#d03070"/><rect x="6.1" y="20.45" width="0.85" height="1.1" fill="#d03070"/><rect x="7.1" y="20.45" width="0.85" height="1.1" fill="#9a9a9a"/><rect x="6.1" y="22.45" width="0.85" height="1.1" fill="#b8b8b8"/><rect x="7.1" y="22.45" width="0.85" height="1.1" fill="#b8b8b8"/><rect x="8.1" y="22.45" width="0.85" height="1.1" fill="#b8b8b8"/><rect x="9.1" y="22.45" width="0.85" height="1.1" fill="#b8b8b8"/><rect x="10.1" y="22.45" width="0.85" height="1.1" fill="#b8b8b8"/><rect x="11.1" y="22.45" width="0.85" height="1.1" fill="#b8b8b8"/><rect x="12.1" y="22.45" width="0.85" height="1.1" fill="#b8b8b8"/><rect x="13.1" y="22.45" width="0.85" height="1.1" fill="#b8b8b8"/><rect x="14.1" y="22.45" width="0.85" height="1.1" fill="#b8b8b8"/><rect x="16.1" y="22.45" width="0.85" height="1.1" fill="#b8b8b8"/><rect x="17.1" y="22.45" width="0.85" height="1.1" fill="#b8b8b8"/><rect x="18.1" y="22.45" width="0.85" height="1.1" fill="#b8b8b8"/><rect x="19.1" y="22.45" width="0.85" height="1.1" fill="#b8b8b8"/><rect x="20.1" y="22.45" width="0.85" height="1.1" fill="#b8b8b8"/><rect x="22.1" y="22.45" width="0.85" height="1.1" fill="#b8b8b8"/><rect x="23.1" y="22.45" width="0.85" height="1.1" fill="#b8b8b8"/><rect x="25.1" y="22.45" width="0.85" height="1.1" fill="#b8b8b8"/><rect x="26.1" y="22.45" width="0.85" height="1.1" fill="#b8b8b8"/><rect x="27.1" y="22.45" width="0.85" height="1.1" fill="#b8b8b8"/><rect x="29.1" y="22.45" width="0.85" height="1.1" fill="#b8b8b8"/><rect x="30.1" y="22.45" width="0.85" height="1.1" fill="#b8b8b8"/><rect x="31.1" y="22.45" width="0.85" height="1.1" fill="#b8b8b8"/><rect x="32.1" y="22.45" width="0.85" height="1.1" fill="#b8b8b8"/><rect x="34.1" y="22.45" width="0.85" height="1.1" fill="#b8b8b8"/><rect x="35.1" y="22.45" width="0.85" height="1.1" fill="#b8b8b8"/><rect x="36.1" y="22.45" width="0.85" height="1.1" fill="#b8b8b8"/><rect x="37.1" y="22.45" width="0.85" height="1.1" fill="#b8b8b8"/><rect x="38.1" y="22.45" width="0.85" height="1.1" fill="#b8b8b8"/><rect x="40.1" y="22.45" width="0.85" height="1.1" fill="#b8b8b8"/><rect x="42.1" y="22.45" width="0.85" height="1.1" fill="#b8b8b8"/><rect x="43.1" y="22.45" width="0.85" height="1.1" fill="#b8b8b8"/><rect x="44.1" y="22.45" width="0.85" height="1.1" fill="#b8b8b8"/><rect x="45.1" y="22.45" width="0.85" height="1.1" fill="#b8b8b8"/><rect x="46.1" y="22.45" width="0.85" height="1.1" fill="#b8b8b8"/><rect x="47.1" y="22.45" width="0.85" height="1.1" fill="#b8b8b8"/><rect x="48.1" y="22.45" width="0.85" height="1.1" fill="#b8b8b8"/><rect x="49.1" y="22.45" width="0.85" height="1.1" fill="#b8b8b8"/><rect x="50.1" y="22.45" width="0.85" height="1.1" fill="#b8b8b8"/><rect x="51.1" y="22.45" width="0.85" height="1.1" fill="#b8b8b8"/><rect x="52.1" y="22.45" width="0.85" height="1.1" fill="#b8b8b8"/><rect x="54.1" y="22.45" width="0.85" height="1.1" fill="#b8b8b8"/><rect x="55.1" y="22.45" width="0.85" height="1.1" fill="#b8b8b8"/><rect x="56.1" y="22.45" width="0.85" height="1.1" fill="#b8b8b8"/><rect x="57.1" y="22.45" width="0.85" height="1.1" fill="#b8b8b8"/><rect x="58.1" y="22.45" width="0.85" height="1.1" fill="#b8b8b8"/><rect x="59.1" y="22.45" width="0.85" height="1.1" fill="#b8b8b8"/><rect x="60.1" y="22.45" width="0.85" height="1.1" fill="#b8b8b8"/><rect x="62.1" y="22.45" width="0.85" height="1.1" fill="#b8b8b8"/><rect x="63.1" y="22.45" width="0.85" height="1.1" fill="#b8b8b8"/><rect x="65.1" y="22.45" width="0.85" height="1.1" fill="#b8b8b8"/><rect x="66.1" y="22.45" width="0.85" height="1.1" fill="#b8b8b8"/><rect x="67.1" y="22.45" width="0.85" height="1.1" fill="#b8b8b8"/><rect x="69.1" y="22.45" width="0.85" height="1.1" fill="#b8b8b8"/><rect x="70.1" y="22.45" width="0.85" height="1.1" fill="#b8b8b8"/><rect x="71.1" y="22.45" width="0.85" height="1.1" fill="#b8b8b8"/><rect x="72.1" y="22.45" width="0.85" height="1.1" fill="#b8b8b8"/><rect x="74.1" y="22.45" width="0.85" height="1.1" fill="#b8b8b8"/><rect x="75.1" y="22.45" width="0.85" height="1.1" fill="#b8b8b8"/><rect x="76.1" y="22.45" width="0.85" height="1.1" fill="#b8b8b8"/><rect x="77.1" y="22.45" width="0.85" height="1.1" fill="#b8b8b8"/><rect x="6.1" y="24.45" width="0.85" height="1.1" fill="#b8b8b8"/><rect x="7.1" y="24.45" width="0.85" height="1.1" fill="#b8b8b8"/><rect x="8.1" y="24.45" width="0.85" height="1.1" fill="#b8b8b8"/><rect x="9.1" y="24.45" width="0.85" height="1.1" fill="#b8b8b8"/><rect x="11.1" y="24.45" width="0.85" height="1.1" fill="#b8b8b8"/><rect x="12.1" y="24.45" width="0.85" height="1.1" fill="#b8b8b8"/><rect x="13.1" y="24.45" width="0.85" height="1.1" fill="#b8b8b8"/><rect x="14.1" y="24.45" width="0.85" height="1.1" fill="#b8b8b8"/><rect x="15.1" y="24.45" width="0.85" height="1.1" fill="#b8b8b8"/><rect x="16.1" y="24.45" width="0.85" height="1.1" fill="#b8b8b8"/><rect x="17.1" y="24.45" width="0.85" height="1.1" fill="#b8b8b8"/><rect x="18.1" y="24.45" width="0.85" height="1.1" fill="#b8b8b8"/><rect x="19.1" y="24.45" width="0.85" height="1.1" fill="#b8b8b8"/><rect x="21.1" y="24.45" width="0.85" height="1.1" fill="#b8b8b8"/><rect x="22.1" y="24.45" width="0.85" height="1.1" fill="#b8b8b8"/><rect x="23.1" y="24.45" width="0.85" height="1.1" fill="#b8b8b8"/><rect x="24.1" y="24.45" width="0.85" height="1.1" fill="#b8b8b8"/><rect x="25.1" y="24.45" width="0.85" height="1.1" fill="#b8b8b8"/><rect x="26.1" y="24.45" width="0.85" height="1.1" fill="#b8b8b8"/><rect x="27.1" y="24.45" width="0.85" height="1.1" fill="#b8b8b8"/><rect x="28.1" y="24.45" width="0.85" height="1.1" fill="#b8b8b8"/><rect x="4.1" y="26.45" width="0.85" height="1.1" fill="#9a9a9a"/><rect x="5.1" y="26.45" width="0.85" height="1.1" fill="#9a9a9a"/><rect x="6.1" y="26.45" width="0.85" height="1.1" fill="#d03070"/><rect x="7.1" y="26.45" width="0.85" height="1.1" fill="#d03070"/><rect x="8.1" y="26.45" width="0.85" height="1.1" fill="#9a9a9a"/><rect x="4.1" y="30.45" width="0.85" height="1.1" fill="#9a9a9a"/><rect x="5.1" y="30.45" width="0.85" height="1.1" fill="#d03070"/><rect x="6.1" y="30.45" width="0.85" height="1.1" fill="#d03070"/><rect x="7.1" y="30.45" width="0.85" height="1.1" fill="#9a9a9a"/><rect x="6.1" y="32.45" width="0.85" height="1.1" fill="#b8b8b8"/><rect x="7.1" y="32.45" width="0.85" height="1.1" fill="#b8b8b8"/><rect x="8.1" y="32.45" width="0.85" height="1.1" fill="#b8b8b8"/><rect x="10.1" y="32.45" width="0.85" height="1.1" fill="#b8b8b8"/><rect x="11.1" y="32.45" width="0.85" height="1.1" fill="#b8b8b8"/><rect x="12.1" y="32.45" width="0.85" height="1.1" fill="#b8b8b8"/><rect x="13.1" y="32.45" width="0.85" height="1.1" fill="#b8b8b8"/><rect x="14.1" y="32.45" width="0.85" height="1.1" fill="#b8b8b8"/><rect x="16.1" y="32.45" width="0.85" height="1.1" fill="#b8b8b8"/><rect x="17.1" y="32.45" width="0.85" height="1.1" fill="#b8b8b8"/><rect x="18.1" y="32.45" width="0.85" height="1.1" fill="#b8b8b8"/><rect x="19.1" y="32.45" width="0.85" height="1.1" fill="#b8b8b8"/><rect x="21.1" y="32.45" width="0.85" height="1.1" fill="#b8b8b8"/><rect x="22.1" y="32.45" width="0.85" height="1.1" fill="#b8b8b8"/><rect x="24.1" y="32.45" width="0.85" height="1.1" fill="#b8b8b8"/><rect x="25.1" y="32.45" width="0.85" height="1.1" fill="#b8b8b8"/><rect x="27.1" y="32.45" width="0.85" height="1.1" fill="#b8b8b8"/><rect x="28.1" y="32.45" width="0.85" height="1.1" fill="#b8b8b8"/><rect x="29.1" y="32.45" width="0.85" height="1.1" fill="#b8b8b8"/><rect x="30.1" y="32.45" width="0.85" height="1.1" fill="#b8b8b8"/><rect x="31.1" y="32.45" width="0.85" height="1.1" fill="#b8b8b8"/><rect x="32.1" y="32.45" width="0.85" height="1.1" fill="#b8b8b8"/><rect x="33.1" y="32.45" width="0.85" height="1.1" fill="#b8b8b8"/><rect x="35.1" y="32.45" width="0.85" height="1.1" fill="#b8b8b8"/><rect x="36.1" y="32.45" width="0.85" height="1.1" fill="#b8b8b8"/><rect x="37.1" y="32.45" width="0.85" height="1.1" fill="#b8b8b8"/><rect x="38.1" y="32.45" width="0.85" height="1.1" fill="#b8b8b8"/><rect x="39.1" y="32.45" width="0.85" height="1.1" fill="#b8b8b8"/><rect x="40.1" y="32.45" width="0.85" height="1.1" fill="#b8b8b8"/><rect x="41.1" y="32.45" width="0.85" height="1.1" fill="#b8b8b8"/><rect x="43.1" y="32.45" width="0.85" height="1.1" fill="#b8b8b8"/><rect x="44.1" y="32.45" width="0.85" height="1.1" fill="#b8b8b8"/><rect x="45.1" y="32.45" width="0.85" height="1.1" fill="#b8b8b8"/><rect x="46.1" y="32.45" width="0.85" height="1.1" fill="#b8b8b8"/><rect x="47.1" y="32.45" width="0.85" height="1.1" fill="#b8b8b8"/><rect x="49.1" y="32.45" width="0.85" height="1.1" fill="#b8b8b8"/><rect x="50.1" y="32.45" width="0.85" height="1.1" fill="#b8b8b8"/><rect x="51.1" y="32.45" width="0.85" height="1.1" fill="#b8b8b8"/><rect x="52.1" y="32.45" width="0.85" height="1.1" fill="#b8b8b8"/><rect x="54.1" y="32.45" width="0.85" height="1.1" fill="#b8b8b8"/><rect x="55.1" y="32.45" width="0.85" height="1.1" fill="#b8b8b8"/><rect x="57.1" y="32.45" width="0.85" height="1.1" fill="#b8b8b8"/><rect x="58.1" y="32.45" width="0.85" height="1.1" fill="#b8b8b8"/><rect x="59.1" y="32.45" width="0.85" height="1.1" fill="#b8b8b8"/><rect x="61.1" y="32.45" width="0.85" height="1.1" fill="#b8b8b8"/><rect x="62.1" y="32.45" width="0.85" height="1.1" fill="#b8b8b8"/><rect x="63.1" y="32.45" width="0.85" height="1.1" fill="#b8b8b8"/><rect x="64.1" y="32.45" width="0.85" height="1.1" fill="#b8b8b8"/><rect x="66.1" y="32.45" width="0.85" height="1.1" fill="#b8b8b8"/><rect x="68.1" y="32.45" width="0.85" height="1.1" fill="#b8b8b8"/><rect x="69.1" y="32.45" width="0.85" height="1.1" fill="#b8b8b8"/><rect x="70.1" y="32.45" width="0.85" height="1.1" fill="#b8b8b8"/><rect x="71.1" y="32.45" width="0.85" height="1.1" fill="#b8b8b8"/><rect x="72.1" y="32.45" width="0.85" height="1.1" fill="#b8b8b8"/><rect x="6.1" y="34.45" width="0.85" height="1.1" fill="#b8b8b8"/><rect x="7.1" y="34.45" width="0.85" height="1.1" fill="#b8b8b8"/><rect x="8.1" y="34.45" width="0.85" height="1.1" fill="#b8b8b8"/><rect x="9.1" y="34.45" width="0.85" height="1.1" fill="#b8b8b8"/><rect x="10.1" y="34.45" width="0.85" height="1.1" fill="#b8b8b8"/><rect x="11.1" y="34.45" width="0.85" height="1.1" fill="#b8b8b8"/><rect x="12.1" y="34.45" width="0.85" height="1.1" fill="#b8b8b8"/><rect x="13.1" y="34.45" width="0.85" height="1.1" fill="#b8b8b8"/><rect x="14.1" y="34.45" width="0.85" height="1.1" fill="#b8b8b8"/><rect x="16.1" y="34.45" width="0.85" height="1.1" fill="#b8b8b8"/><rect x="17.1" y="34.45" width="0.85" height="1.1" fill="#b8b8b8"/><rect x="18.1" y="34.45" width="0.85" height="1.1" fill="#b8b8b8"/><rect x="20.1" y="34.45" width="0.85" height="1.1" fill="#b8b8b8"/><rect x="21.1" y="34.45" width="0.85" height="1.1" fill="#b8b8b8"/><rect x="22.1" y="34.45" width="0.85" height="1.1" fill="#b8b8b8"/><rect x="23.1" y="34.45" width="0.85" height="1.1" fill="#b8b8b8"/><rect x="24.1" y="34.45" width="0.85" height="1.1" fill="#b8b8b8"/><rect x="25.1" y="34.45" width="0.85" height="1.1" fill="#b8b8b8"/><rect x="26.1" y="34.45" width="0.85" height="1.1" fill="#b8b8b8"/><rect x="27.1" y="34.45" width="0.85" height="1.1" fill="#b8b8b8"/><rect x="29.1" y="34.45" width="0.85" height="1.1" fill="#b8b8b8"/><rect x="30.1" y="34.45" width="0.85" height="1.1" fill="#b8b8b8"/><rect x="32.1" y="34.45" width="0.85" height="1.1" fill="#b8b8b8"/><rect x="33.1" y="34.45" width="0.85" height="1.1" fill="#b8b8b8"/><rect x="34.1" y="34.45" width="0.85" height="1.1" fill="#b8b8b8"/><rect x="36.1" y="34.45" width="0.85" height="1.1" fill="#b8b8b8"/><rect x="37.1" y="34.45" width="0.85" height="1.1" fill="#b8b8b8"/><rect x="38.1" y="34.45" width="0.85" height="1.1" fill="#b8b8b8"/><rect x="39.1" y="34.45" width="0.85" height="1.1" fill="#b8b8b8"/><rect x="40.1" y="34.45" width="0.85" height="1.1" fill="#b8b8b8"/><rect x="42.1" y="34.45" width="0.85" height="1.1" fill="#b8b8b8"/><rect x="43.1" y="34.45" width="0.85" height="1.1" fill="#b8b8b8"/><rect x="44.1" y="34.45" width="0.85" height="1.1" fill="#b8b8b8"/><rect x="46.1" y="34.45" width="0.85" height="1.1" fill="#b8b8b8"/><rect x="47.1" y="34.45" width="0.85" height="1.1" fill="#b8b8b8"/><rect x="48.1" y="34.45" width="0.85" height="1.1" fill="#b8b8b8"/><rect x="49.1" y="34.45" width="0.85" height="1.1" fill="#b8b8b8"/><rect x="4.1" y="36.45" width="0.85" height="1.1" fill="#9a9a9a"/><rect x="5.1" y="36.45" width="0.85" height="1.1" fill="#9a9a9a"/><rect x="6.1" y="36.45" width="0.85" height="1.1" fill="#d03070"/><rect x="7.1" y="36.45" width="0.85" height="1.1" fill="#d03070"/><rect x="8.1" y="36.45" width="0.85" height="1.1" fill="#9a9a9a"/><rect x="2.1" y="38.45" width="0.85" height="1.1" fill="#9a9a9a"/><rect x="3.1" y="38.45" width="0.85" height="1.1" fill="#9a9a9a"/><rect x="4.1" y="38.45" width="0.85" height="1.1" fill="#d03070"/><rect x="5.1" y="38.45" width="0.85" height="1.1" fill="#d03070"/><rect x="6.1" y="38.45" width="0.85" height="1.1" fill="#d03070"/><rect x="7.1" y="38.45" width="0.85" height="1.1" fill="#d03070"/><rect x="8.1" y="38.45" width="0.85" height="1.1" fill="#9a9a9a"/><rect x="0.1" y="40.45" width="0.85" height="1.1" fill="#9a9a9a"/><rect x="1.1" y="40.45" width="0.85" height="1.1" fill="#9a9a9a"/><rect x="2.1" y="40.45" width="0.85" height="1.1" fill="#d03070"/><rect x="3.1" y="40.45" width="0.85" height="1.1" fill="#d03070"/><rect x="4.1" y="40.45" width="0.85" height="1.1" fill="#d03070"/><rect x="5.1" y="40.45" width="0.85" height="1.1" fill="#d03070"/><rect x="6.1" y="40.45" width="0.85" height="1.1" fill="#9a9a9a"/></svg>
</div>
<div class="red" style="left:141px;top:62px;width:216px;height:31px"></div>
<div class="red" style="left:691px;top:58px;width:196px;height:35px"></div>
<div class="red" style="left:5px;top:373px;width:136px;height:39px"></div>
</body></html>
